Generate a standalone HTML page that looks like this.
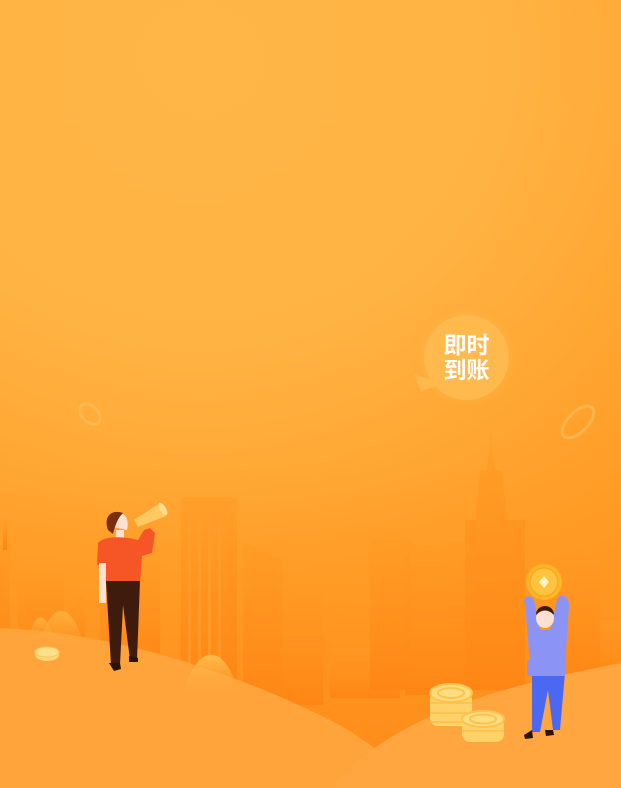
<!DOCTYPE html>
<html><head><meta charset="utf-8"><style>
html,body{margin:0;padding:0;width:621px;height:788px;overflow:hidden}
body{background:radial-gradient(ellipse 700px 640px at 200px 60px,#ffb646 0%,#ffb343 45%,#ffa22d 78%,#ff9821 100%);position:relative;font-family:"Liberation Sans","Noto Sans CJK SC",sans-serif}
svg{position:absolute;left:0;top:0}
.bub{position:absolute;left:424px;top:315px;width:85px;height:85px;border-radius:50%;background:#ffb94c;box-shadow:0 0 10px rgba(255,190,80,.5)}
.tail{position:absolute;left:417px;top:370px;width:0;height:0;border-right:24px solid transparent;border-bottom:18px solid #ffb94c;transform:rotate(-20deg)}
.txt{position:absolute;left:424px;top:331px;width:85px;text-align:center;color:#fff;font-size:23px;line-height:25px;font-family:"Noto Sans CJK SC",sans-serif;font-weight:bold}
</style></head><body>
<svg width="621" height="788" viewBox="0 0 621 788">
<defs>
<linearGradient id="city" x1="0" y1="0" x2="0" y2="1"><stop offset="0" stop-color="#ff9a24" stop-opacity=".5"/><stop offset="1" stop-color="#ff8614"/></linearGradient>
<linearGradient id="low" x1="0" y1="0" x2="0" y2="1"><stop offset="0" stop-color="#ff9a24" stop-opacity="0"/><stop offset="1" stop-color="#ff8a18"/></linearGradient>
<linearGradient id="peak" x1="0" y1="0" x2="0" y2="1"><stop offset="0" stop-color="#ffbc4a"/><stop offset="1" stop-color="#ffa43a" stop-opacity="0"/></linearGradient>
</defs>
<rect x="0" y="460" width="621" height="328" fill="url(#low)"/>
<g fill="url(#city)">
<rect x="0" y="545" width="10" height="120"/><rect x="3" y="520" width="4" height="30"/>
<rect x="18" y="573" width="46" height="90"/>
<path d="M62 620 L85 590 L85 660 L62 660Z"/>
<rect x="100" y="560" width="60" height="110"/>
<rect x="181" y="497" width="56" height="190"/>
<path d="M243 542 L283 560 L283 700 L243 700Z"/>
<rect x="283" y="585" width="40" height="120"/>
<rect x="330" y="648" width="70" height="50"/>
<rect x="370" y="540" width="40" height="150"/>
<rect x="405" y="545" width="60" height="150"/>
<path d="M465 520 L475 520 L480 470 L487 470 L491 430 L495 470 L502 470 L507 520 L525 520 L525 690 L465 690Z"/>
<rect x="555" y="560" width="45" height="120"/>
<rect x="600" y="620" width="21" height="60"/>
</g>
<g fill="#ffa030" opacity=".6">
<rect x="188" y="515" width="3" height="150"/><rect x="198" y="515" width="3" height="150"/><rect x="208" y="515" width="3" height="150"/><rect x="218" y="515" width="3" height="150"/>
</g>
<path d="M-10 628 C120 630 250 680 330 720 C370 740 400 770 420 788 L-10 788Z" fill="#ffa43a"/>
<path d="M330 788 C390 720 480 690 621 663 L621 788Z" fill="#ffa640"/>
<path d="M183 700 C190 650 225 630 240 700Z" fill="url(#peak)"/>
<path d="M28 640 C35 610 45 610 55 640Z" fill="url(#peak)" opacity=".7"/>
<path d="M42 640 C50 600 75 600 84 650Z" fill="url(#peak)" opacity=".7"/>
<g fill="none" stroke="#ffbc5a" stroke-width="3" opacity=".7">
<ellipse cx="90" cy="414" rx="8" ry="12" transform="rotate(-45 90 414)"/>
<ellipse cx="578" cy="422" rx="10" ry="20" transform="rotate(45 578 422)"/>
</g>
<ellipse cx="47" cy="655" rx="12" ry="6" fill="#ffd67a"/><ellipse cx="47" cy="652" rx="12" ry="5" fill="#ffe08a" stroke="#ffc44e"/>
<!-- man left -->
<path d="M113 527 C108 518 112 512 120 513 C127 514 129 522 127 530 Z" fill="#fde0cf"/>
<path d="M108 530 C103 516 112 509 123 513 C118 518 116 523 113 534Z" fill="#7a2e10"/>
<rect x="116" y="530" width="8" height="9" fill="#fde0cf"/>
<path d="M98 543 C104 536 122 536 138 540 L144 530 L150 528 L155 533 L152 553 L142 556 L140 582 L105 582 L104 565 L97 565Z" fill="#f65525"/>
<rect x="99" y="563" width="7" height="40" fill="#fde0cf"/>
<path d="M106 581 L140 581 L137 660 L130 660 L123 605 L120 665 L111 665 Z" fill="#3e1b0c"/>
<path d="M109 663 L120 663 L121 669 L114 671Z M129 656 L138 658 L138 662 L129 662Z" fill="#2a1408"/>
<path d="M134 520 L160 503 L166 516 L138 527Z" fill="#ffc860"/>
<ellipse cx="163" cy="509" rx="3" ry="7" transform="rotate(-30 163 509)" fill="#ffdb8a"/>
<!-- man right -->
<path d="M525 604 C522 598 528 592 534 600 L540 630 L550 630 L557 600 C560 592 569 596 569 605 L565 665 L530 665Z" fill="#8b94f5"/>
<path d="M532 673 L565 673 L560 730 L553 730 L548 690 L540 732 L532 732Z" fill="#4a68f2"/>
<rect x="527" y="660" width="38" height="16" fill="#8b94f5"/>
<ellipse cx="545" cy="618" rx="9" ry="10" fill="#fde0cf"/>
<path d="M536 615 C536 603 554 603 554 615 C548 609 542 609 536 615Z" fill="#3a1a0e"/>
<circle cx="544" cy="582" r="18" fill="#ffb627"/><circle cx="544" cy="582" r="14" fill="#ffc340" stroke="#f5a214"/>
<path d="M544 576 L549 582 L544 588 L539 582Z" fill="#fff3c0"/>
<path d="M524 735 L532 730 L533 738 L525 739Z M545 730 L553 730 L554 735 L546 736Z" fill="#2a1408"/>
<!-- coin stacks -->
<g>
<rect x="430" y="692" width="42" height="34" rx="8" fill="#ffd26a"/>
<g stroke="#ffbe45" stroke-width="1.5"><line x1="430" y1="703" x2="472" y2="703"/><line x1="430" y1="713" x2="472" y2="713"/><line x1="430" y1="722" x2="472" y2="722"/></g>
<ellipse cx="451" cy="693" rx="21" ry="9" fill="#ffdd80" stroke="#ffc24c" stroke-width="2"/>
<ellipse cx="451" cy="693" rx="13" ry="5" fill="none" stroke="#ffc24c" stroke-width="2"/>
<rect x="462" y="718" width="42" height="24" rx="8" fill="#ffd26a"/>
<line x1="462" y1="731" x2="504" y2="731" stroke="#ffbe45" stroke-width="1.5"/>
<ellipse cx="483" cy="719" rx="21" ry="8" fill="#ffdd80" stroke="#ffc24c" stroke-width="2"/>
<ellipse cx="483" cy="719" rx="13" ry="4.5" fill="none" stroke="#ffc24c" stroke-width="2"/>
</g>
</svg>
<div class="tail"></div>
<div class="bub"></div>
<div class="txt">即时<br>到账</div>
</body></html>
